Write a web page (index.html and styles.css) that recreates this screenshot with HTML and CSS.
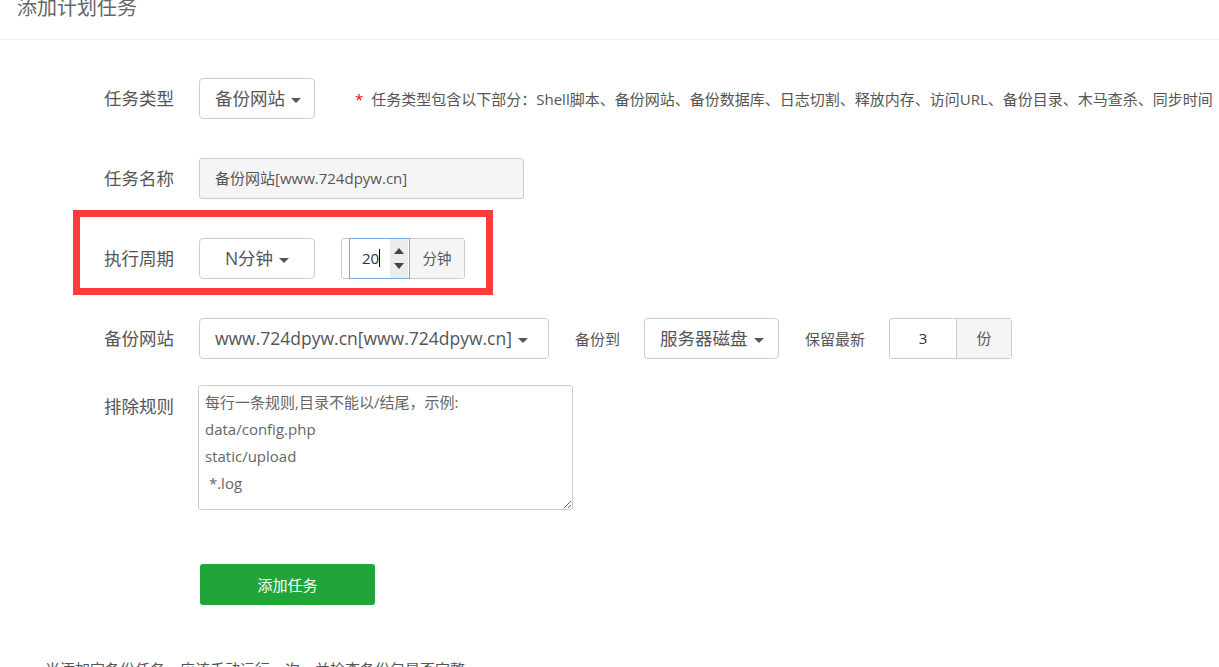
FILE: index.html
```html
<!DOCTYPE html>
<html>
<head>
    <meta charset="utf-8">
    <title>添加计划任务</title>
    <link rel="stylesheet" href="styles.css">
</head>
<body>
    <div class="title-bar"><span class="title">添加计划任务</span></div>

    <div class="crontab-form">
        <div class="row">
            <span class="label">任务类型</span>
            <div class="dropdown type-select">备份网站<i class="caret"></i></div>
            <span class="tips"><em>*</em>任务类型包含以下部分：Shell脚本、备份网站、备份数据库、日志切割、释放内存、访问URL、备份目录、木马查杀、同步时间</span>
        </div>

        <div class="row">
            <span class="label">任务名称</span>
            <div class="text-input disabled">备份网站[www.724dpyw.cn]</div>
        </div>

        <div class="row">
            <span class="label">执行周期</span>
            <div class="dropdown cycle-select">N分钟<i class="caret"></i></div>
            <div class="input-group cycle-group">
                <div class="num-input focus">
                    <span class="num-value">20<i class="cursor"></i></span>
                    <span class="spinner"><i class="up"></i><i class="down"></i></span>
                </div>
                <span class="addon">分钟</span>
            </div>
            <div class="mark"></div>
        </div>

        <div class="row">
            <span class="label">备份网站</span>
            <div class="dropdown site-select">www.724dpyw.cn[www.724dpyw.cn]<i class="caret"></i></div>
            <span class="inline-label">备份到</span>
            <div class="dropdown disk-select">服务器磁盘<i class="caret"></i></div>
            <span class="inline-label">保留最新</span>
            <div class="input-group save-group">
                <span class="save-value">3</span>
                <span class="addon">份</span>
            </div>
        </div>

        <div class="row row-top">
            <span class="label">排除规则</span>
            <textarea class="exclude" spellcheck="false">每行一条规则,目录不能以/结尾，示例:
data/config.php
static/upload
 *.log</textarea>
        </div>

        <div class="row row-btn">
            <button class="btn-submit">添加任务</button>
        </div>

        <p class="notice">当添加完备份任务，应该手动运行一次，并检查备份包是否完整</p>
    </div>
</body>
</html>
```

FILE: styles.css
```css
body {
    margin: 0;
    font-family: "Open Sans", "Noto Sans CJK SC", sans-serif;
    color: #555;
    background: #fff;
    overflow: hidden;
}
.title-bar {
    height: 39px;
    border-bottom: 1px solid #eee;
    padding-left: 17px;
}
.title {
    display: block;
    font-size: 20px;
    line-height: 16px;
    color: #666;
}
.crontab-form {
    position: relative;
    padding-top: 38px;
}
.row {
    position: relative;
    display: flex;
    align-items: center;
    height: 41px;
    margin-bottom: 39px;
}
.row-top {
    align-items: flex-start;
    height: auto;
    margin-top: -13px;
    margin-bottom: 54px;
}
.row-top .label {
    line-height: 20px;
    margin-top: 11px;
}
.label {
    width: 174px;
    margin-right: 25px;
    text-align: right;
    font-size: 17.5px;
    line-height: 41px;
    color: #555;
    flex-shrink: 0;
}
.dropdown {
    box-sizing: border-box;
    height: 41px;
    border: 1px solid #ccc;
    border-radius: 4px;
    font-size: 17.5px;
    line-height: 39px;
    padding: 0 15px;
    white-space: nowrap;
    color: #555;
}
.caret {
    display: inline-block;
    width: 0;
    height: 0;
    margin-left: 6px;
    vertical-align: middle;
    border-top: 5px solid #555;
    border-left: 5px solid transparent;
    border-right: 5px solid transparent;
}
.type-select {
    width: 116px;
}
.cycle-select {
    width: 116px;
    text-align: center;
    padding: 0;
}
.site-select {
    width: 350px;
}
.disk-select {
    width: 135px;
}
.tips {
    margin-left: 40px;
    font-size: 15px;
    color: #555;
    white-space: nowrap;
}
.tips em {
    font-style: normal;
    color: #f00;
    margin-right: 8px;
}
.text-input {
    box-sizing: border-box;
    width: 325px;
    height: 41px;
    border: 1px solid #ccc;
    border-radius: 3px;
    padding-left: 15px;
    font-size: 15px;
    line-height: 39px;
    color: #555;
}
.text-input.disabled {
    background: #f5f5f5;
}
.input-group {
    box-sizing: border-box;
    display: flex;
    height: 41px;
    border: 1px solid #ccc;
    border-radius: 3px;
}
.cycle-group {
    margin-left: 26px;
    padding-left: 7px;
    width: 124px;
}
.num-input {
    box-sizing: border-box;
    display: flex;
    width: 61px;
    height: 41px;
    margin: -1px 0;
    border: 1px solid #7ba6e8;
}
.num-value {
    width: 40px;
    padding-left: 12px;
    font-size: 15px;
    line-height: 39px;
    color: #333;
    box-sizing: border-box;
}
.cursor {
    display: inline-block;
    width: 1px;
    height: 18px;
    background: #000;
    vertical-align: -3px;
}
.spinner {
    width: 18px;
    background: #ececec;
    display: flex;
    flex-direction: column;
    justify-content: space-between;
    align-items: center;
    padding: 9px 0;
    box-sizing: border-box;
}
.spinner .up,
.spinner .down {
    width: 0;
    height: 0;
    border-left: 5px solid transparent;
    border-right: 5px solid transparent;
}
.spinner .up {
    border-bottom: 6px solid #444;
}
.spinner .down {
    border-top: 6px solid #444;
}
.addon {
    flex: 1;
    background: #f5f5f5;
    text-align: center;
    font-size: 15px;
    line-height: 39px;
    color: #555;
}
.cycle-group .addon {
    font-size: 14.5px;
}
.inline-label {
    font-size: 15px;
    margin: 0 24px 0 26px;
    color: #555;
}
.save-group {
    width: 123px;
}
.save-value {
    width: 66px;
    border-right: 1px solid #ccc;
    text-align: center;
    font-size: 15px;
    line-height: 39px;
    color: #333;
}
.mark {
    position: absolute;
    left: 73px;
    top: -28px;
    width: 420px;
    height: 85px;
    box-sizing: border-box;
    border: 7px solid #ff3b3b;
}
.exclude {
    box-sizing: border-box;
    width: 375px;
    height: 125px;
    margin-left: -1px;
    border: 1px solid #ccc;
    border-radius: 3px;
    padding: 3px 6px;
    font-family: "Open Sans", "Noto Sans CJK SC", sans-serif;
    font-size: 15px;
    line-height: 27px;
    color: #666;
    resize: both;
    outline: none;
}
.row-btn {
    margin-bottom: 0;
}
.btn-submit {
    margin-left: 200px;
    width: 175px;
    height: 41px;
    border: none;
    border-radius: 3px;
    background: #20a53a;
    color: #fff;
    font-family: "Open Sans", "Noto Sans CJK SC", sans-serif;
    font-size: 15px;
    cursor: pointer;
}
.notice {
    margin: 0;
    padding: 52px 0 0 45px;
    font-size: 15px;
    line-height: 24px;
    color: #555;
}
```
